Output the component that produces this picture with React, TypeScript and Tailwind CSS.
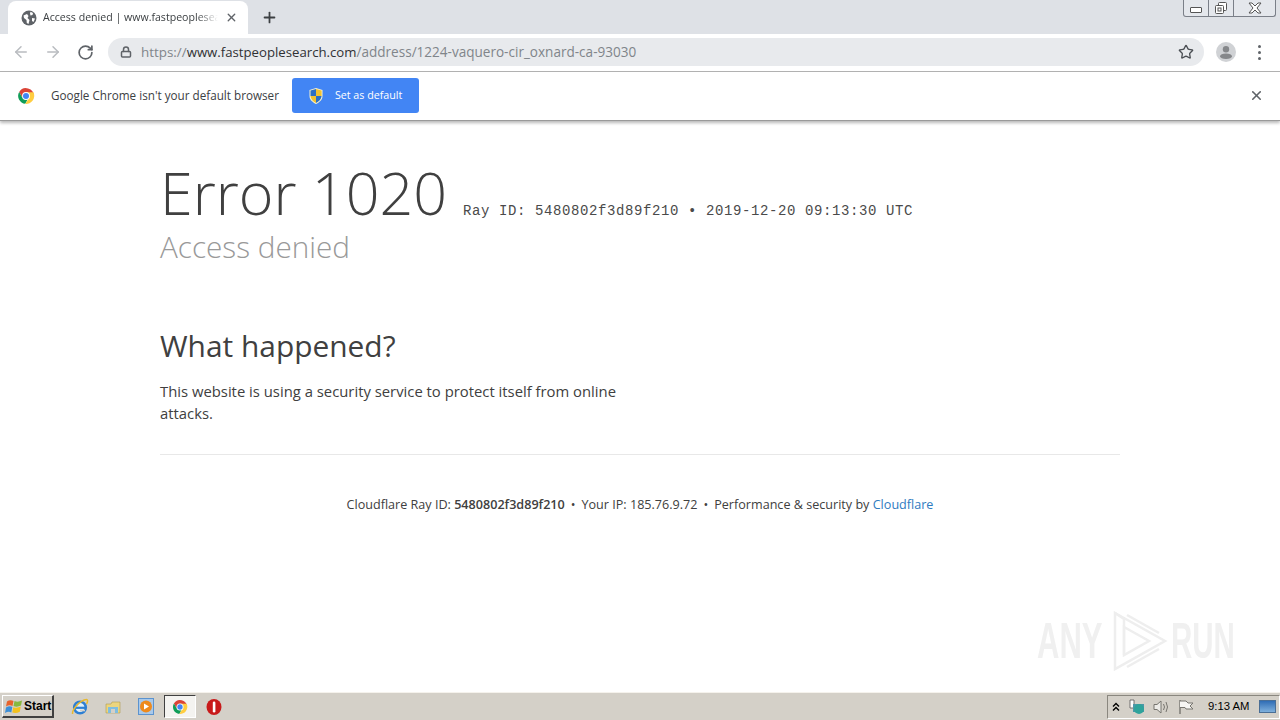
import React from 'react';
import { ArrowLeft, ArrowRight, Lock, Plus, RotateCw, Star, X } from 'lucide-react';

function ChromeLogo({ size }: { size: number }): React.JSX.Element {
  return (
    <svg width={size} height={size} viewBox="0 0 48 48" className="shrink-0">
      <path d="M24 24 L45 24 A21 21 0 0 0 5.8 13.5 L14 28 Z" fill="#db4437" />
      <path d="M24 24 L14 28 L5.8 13.5 A21 21 0 0 0 22 44.9 L30.5 29 Z" fill="#0f9d58" />
      <path d="M24 14 L44 14 A22 22 0 0 1 22 45 L33 27 Z" fill="#ffcd40" />
      <circle cx="24" cy="24" r="10.5" fill="#fff" />
      <circle cx="24" cy="24" r="8" fill="#4285f4" />
    </svg>
  );
}

function ShieldIcon(): React.JSX.Element {
  return (
    <svg width="16" height="18" viewBox="0 0 16 18" className="shrink-0">
      <path d="M8 1 L14.5 3 V9 C14.5 13 11 15.5 8 17 C5 15.5 1.5 13 1.5 9 V3 Z" fill="#f7f3d0" />
      <path d="M8 2 V9 H2.5 V3.6 Z" fill="#2d6fc4" />
      <path d="M8 9 H13.6 C13.3 12.4 10.7 14.6 8 16 Z" fill="#2d6fc4" />
      <path d="M8 2 L13.6 3.6 V9 H8 Z" fill="#f2c230" />
      <path d="M8 9 V16 C5.3 14.6 2.8 12.4 2.5 9 Z" fill="#f2c230" />
    </svg>
  );
}

function GlobeIcon(): React.JSX.Element {
  return (
    <svg width="16" height="16" viewBox="0 0 16 16" className="shrink-0">
      <circle cx="8" cy="8" r="7.5" fill="#5f6368" />
      <path d="M2.5 5.5 L6 4 L7.5 6 L6.5 8 L8.5 10 L7.5 14 L5.8 13 L5.5 10 L3 8 Z" fill="#fff" />
      <path d="M9.5 1.8 L12 3 L11.5 5 L9.5 5.5 L9 3.5 Z" fill="#fff" />
      <path d="M11 8 L14 8.5 L12.5 12 L11 11 Z" fill="#fff" />
    </svg>
  );
}

function AvatarIcon(): React.JSX.Element {
  return (
    <svg width="20" height="20" viewBox="0 0 20 20">
      <circle cx="10" cy="10" r="10" fill="#d0d2d5" />
      <circle cx="10" cy="7.2" r="3.2" fill="#85878a" />
      <ellipse cx="10" cy="14.2" rx="6" ry="2.8" fill="#85878a" />
    </svg>
  );
}

function WindowControls(): React.JSX.Element {
  return (
    <div className="flex h-[17px] w-[93px] rounded-b-[3px] border border-t-0 border-[#7a7f88] bg-[#e4e7ec]">
      <div className="flex w-[25px] items-end justify-center border-r border-[#7a7f88] pb-[3px]">
        <div className="h-[6px] w-[12px] rounded-[1px] border border-[#555] bg-white" />
      </div>
      <div className="flex w-[25px] items-center justify-center border-r border-[#7a7f88]">
        <svg width="14" height="14" viewBox="0 0 14 14" fill="#fff" stroke="#555">
          <rect x="4.5" y="1.5" width="8" height="8" rx="1" />
          <rect x="1.5" y="4.5" width="8" height="8" rx="1" />
          <rect x="4" y="7" width="3" height="3" />
        </svg>
      </div>
      <div className="flex flex-1 items-center justify-center">
        <svg width="14" height="12" viewBox="0 0 14 12" fill="#fff" stroke="#555">
          <path d="M1 1 H4 L7 4 L10 1 H13 L9 6 L13 11 H10 L7 8 L4 11 H1 L5 6 Z" />
        </svg>
      </div>
    </div>
  );
}

function TabStrip(): React.JSX.Element {
  return (
    <div className="flex h-[34px] shrink-0 items-start justify-between bg-[#dee1e6] pr-[4px]">
      <div className="flex items-end">
        <div className="ml-[8px] mt-[1px] flex h-[33px] w-[240px] items-center rounded-t-[8px] bg-white pl-[13px] pr-[10px]">
          <GlobeIcon />
          <span className="ml-[6px] w-[176px] overflow-hidden whitespace-nowrap text-[10.6px] text-[#3c4043] [font-family:'Open_Sans',sans-serif] [mask-image:linear-gradient(to_right,black_88%,transparent)]">
            Access denied | www.fastpeoplesearch.com
          </span>
          <X size={13} strokeWidth={2.5} className="ml-[7px] text-[#5f6368]" />
        </div>
        <Plus size={17} strokeWidth={2.5} className="mb-[8px] ml-[13px] text-[#3c4043]" />
      </div>
      <WindowControls />
    </div>
  );
}

function Toolbar(): React.JSX.Element {
  return (
    <div className="flex h-[38px] shrink-0 items-center border-b border-[#b4b4b4] bg-white pb-[1px] pl-[12px] pr-[19px]">
      <ArrowLeft size={18} strokeWidth={2} className="text-[#b9bcc0]" />
      <ArrowRight size={18} strokeWidth={2} className="ml-[14px] text-[#b9bcc0]" />
      <RotateCw size={17} strokeWidth={2.4} className="ml-[15px] text-[#5f6368]" />
      <div className="ml-[14px] flex h-[28px] flex-1 items-center rounded-full bg-[#e8eaed] pl-[12px] pr-[10px]">
        <Lock size={12} strokeWidth={3} className="text-[#5f6368]" />
        <span className="ml-[9px] flex-1 text-[13.4px] text-[#80858a] [font-family:'Open_Sans',sans-serif]">
          https://<span className="text-[13.2px] text-[#303134]">www.fastpeoplesearch.com</span>
          <span className="text-[13.55px]">/address/1224-vaquero-cir_oxnard-ca-93030</span>
        </span>
        <Star size={16} strokeWidth={2} className="text-[#4b4f54]" />
      </div>
      <div className="ml-[12px]">
        <AvatarIcon />
      </div>
      <div className="ml-[22px] flex flex-col gap-[3px]">
        <div className="h-[3px] w-[3px] rounded-full bg-[#5f6368]" />
        <div className="h-[3px] w-[3px] rounded-full bg-[#5f6368]" />
        <div className="h-[3px] w-[3px] rounded-full bg-[#5f6368]" />
      </div>
    </div>
  );
}

function DefaultBrowserBar(): React.JSX.Element {
  return (
    <div className="relative z-10 flex h-[49px] shrink-0 items-center border-b border-[#9a9a9a] bg-white pb-[1px] pl-[17px] pr-[16px] shadow-[0_2px_3px_rgba(0,0,0,0.28)]">
      <ChromeLogo size={18} />
      <span className="ml-[16px] text-[11.7px] text-[#3c4043] [font-family:'Open_Sans',sans-serif]">
        Google Chrome isn't your default browser
      </span>
      <button className="ml-[13px] flex h-[35px] w-[127px] items-center rounded-[3px] bg-[#4285f4] pl-[16px]">
        <ShieldIcon />
        <span className="ml-[11px] text-[10.7px] text-white [font-family:'Open_Sans',sans-serif]">Set as default</span>
      </button>
      <X size={15} strokeWidth={2.5} className="ml-auto text-[#5f6368]" />
    </div>
  );
}

function Watermark(): React.JSX.Element {
  return (
    <div className="absolute left-[1037px] top-[488px] flex items-center text-[50px] font-bold leading-none text-[#f0f0f0] [font-family:'Liberation_Sans_Narrow','Liberation_Sans',sans-serif]">
      <span className="w-[62px] origin-left scale-x-[0.62] whitespace-nowrap">ANY</span>
      <svg width="62" height="64" viewBox="0 0 62 64" fill="none" stroke="#eeeeee" strokeWidth="2.5" className="ml-[8px]">
        <path d="M8 4 L58 32 L8 60 Z" />
        <path d="M17 18 L42 32 L17 46 Z" />
        <path d="M8 4 L17 10 V46" />
        <path d="M20 6 L52 24" />
        <path d="M20 58 L52 40" />
      </svg>
      <span className="ml-[2px] w-[66px] origin-left scale-x-[0.59] whitespace-nowrap">RUN</span>
    </div>
  );
}

function ErrorPage(): React.JSX.Element {
  return (
    <div className="relative min-h-0 flex-1 overflow-hidden bg-white [font-family:'Open_Sans',sans-serif] text-[#404040]">
      <div className="mx-auto w-[960px] pt-[35px]">
        <div className="flex items-baseline">
          <h1 className="text-[59.2px] font-light leading-[72px] tracking-normal">Error 1020</h1>
          <span className="ml-[16px] text-[14px] tracking-[0.6px] text-[#4a4a4a] [font-family:'Liberation_Mono',monospace]">
            Ray ID: 5480802f3d89f210 • 2019-12-20 09:13:30 UTC
          </span>
        </div>
        <h2 className="mt-[1px] text-[29.7px] font-light leading-[36px] text-[#999]">Access denied</h2>
        <h2 className="mt-[61px] text-[29.9px] font-normal leading-[40px] text-[#404040]">What happened?</h2>
        <p className="mt-[14px] w-[480px] text-[14.84px] leading-[22px]">
          This website is using a security service to protect itself from online attacks.
        </p>
        <div className="mt-[30px] border-t border-[#e8e8e8] pt-[41px] text-center text-[12.6px] leading-[18px]">
          Cloudflare Ray ID: <strong className="font-semibold">5480802f3d89f210</strong>
          <span className="mx-[6px]">•</span>Your IP: 185.76.9.72
          <span className="mx-[6px]">•</span>Performance &amp; security by <span className="text-[#2f7bbf]">Cloudflare</span>
        </div>
      </div>
      <Watermark />
    </div>
  );
}

function Taskbar(): React.JSX.Element {
  return (
    <div className="flex h-[28px] shrink-0 items-center border-t border-[#f5f2ec] bg-[#d4d0c8] [font-family:'Liberation_Sans',sans-serif]">
      <button className="ml-[2px] flex h-[23px] w-[52px] items-center border border-b-2 border-r-2 border-white border-b-[#404040] border-r-[#404040] pl-[2px] text-[12px] font-bold text-black">
        <svg width="18" height="17" viewBox="0 0 18 17" className="shrink-0">
          <path d="M2 3.5 Q5 1.5 8.5 3 L7.5 8 Q4.5 6.5 1 8.5 Z" fill="#e8632b" />
          <path d="M9.5 3 Q13 4.5 17 2.5 L16 7.5 Q12 9.5 8.5 8 Z" fill="#86b93f" />
          <path d="M1 9.5 Q4.5 7.5 7.3 9 L6.3 14.5 Q3.5 13 0 15 Z" fill="#3c8fd8" />
          <path d="M8.3 9.2 Q12 10.5 15.8 8.6 L14.8 13.8 Q11 15.8 7.3 14.6 Z" fill="#f4c21d" />
        </svg>
        <span className="ml-[1px]">Start</span>
      </button>
      <svg width="18" height="18" viewBox="0 0 18 18" className="ml-[17px] shrink-0">
        <circle cx="9" cy="9.5" r="5.8" fill="#dff0fb" stroke="#2d7fd3" strokeWidth="2.6" />
        <path d="M3.5 9.8 H14.5" stroke="#2d7fd3" strokeWidth="2.2" />
        <path d="M14 12.5 H9" stroke="#d4d0c8" strokeWidth="1.6" />
        <path d="M1.5 16 C1 12 8 3 15 1.5 C17 1 17 4 15.5 6" fill="none" stroke="#e8b92e" strokeWidth="1.5" />
      </svg>
      <svg width="16" height="16" viewBox="0 0 16 16" className="ml-[16px] shrink-0">
        <path d="M1 5 H6 L7 3 H15 V14 H1 Z" fill="#ecd57e" stroke="#b09a50" strokeWidth="0.6" />
        <path d="M3 8 H13 V14 H3 Z" fill="#7fbde0" />
        <path d="M6 14 V10 H10 V14" fill="#d4d0c8" />
      </svg>
      <svg width="16" height="17" viewBox="0 0 16 17" className="ml-[17px] shrink-0">
        <rect x="0.5" y="0.5" width="15" height="16" fill="#a9c9ea" stroke="#5b93cf" />
        <circle cx="8" cy="8.5" r="6" fill="#ee8a1d" />
        <path d="M6 5.5 L11 8.5 L6 11.5 Z" fill="#fff" />
      </svg>
      <div className="ml-[10px] flex h-[23px] w-[32px] items-center justify-center border border-t-[#404040] border-l-[#404040] border-b-white border-r-white bg-[#f4f3f0]">
        <ChromeLogo size={16} />
      </div>
      <svg width="16" height="18" viewBox="0 0 16 18" className="ml-[10px] shrink-0">
        <ellipse cx="8" cy="9" rx="7.5" ry="8" fill="#c81a1a" />
        <rect x="6.8" y="3.5" width="2.6" height="11" rx="1.3" fill="#fff" />
      </svg>
      <div className="ml-auto flex h-[24px] w-[173px] items-center border border-b-white border-r-white border-t-[#8a877f] border-l-[#8a877f] pl-[4px]">
        <svg width="8" height="10" viewBox="0 0 8 10" fill="none" stroke="#000" strokeWidth="1.4" className="shrink-0">
          <path d="M1 4.5 L4 1.5 L7 4.5" />
          <path d="M1 8.5 L4 5.5 L7 8.5" />
        </svg>
        <svg width="16" height="16" viewBox="0 0 16 16" className="ml-[9px] shrink-0">
          <path d="M1 1 V9 H5 V1 Z" fill="#fff" stroke="#555" strokeWidth="0.8" />
          <rect x="4" y="5" width="11" height="8" fill="#4d97a8" />
          <circle cx="10" cy="10" r="5" fill="#2fa39b" />
        </svg>
        <svg width="17" height="16" viewBox="0 0 17 16" fill="none" stroke="#77756f" strokeWidth="1" className="ml-[8px] shrink-0">
          <path d="M1 5.5 H4 L8 2 V14 L4 10.5 H1 Z" fill="#ecebe7" />
          <path d="M10.5 5 Q12.5 8 10.5 11" />
          <path d="M13 3 Q16 8 13 13" />
        </svg>
        <svg width="16" height="16" viewBox="0 0 16 16" fill="none" stroke="#77756f" strokeWidth="1" className="ml-[8px] shrink-0">
          <path d="M2 1 V15" strokeWidth="1.4" />
          <path d="M2 2 H8 L10 4 H15 L12 7 L15 10 H8 L7 8.5 H2" fill="#f6f5f2" />
        </svg>
        <span className="ml-[14px] whitespace-nowrap text-[11.3px] text-black">9:13 AM</span>
        <div className="ml-[10px] h-[13px] w-[17px] border border-[#4a6e95] bg-gradient-to-b from-[#2f6db5] to-[#7fb0dc]" />
      </div>
    </div>
  );
}

export default function App(): React.JSX.Element {
  return (
    <div className="flex h-[720px] w-[1280px] flex-col overflow-hidden bg-white">
      <TabStrip />
      <Toolbar />
      <DefaultBrowserBar />
      <ErrorPage />
      <Taskbar />
    </div>
  );
}
